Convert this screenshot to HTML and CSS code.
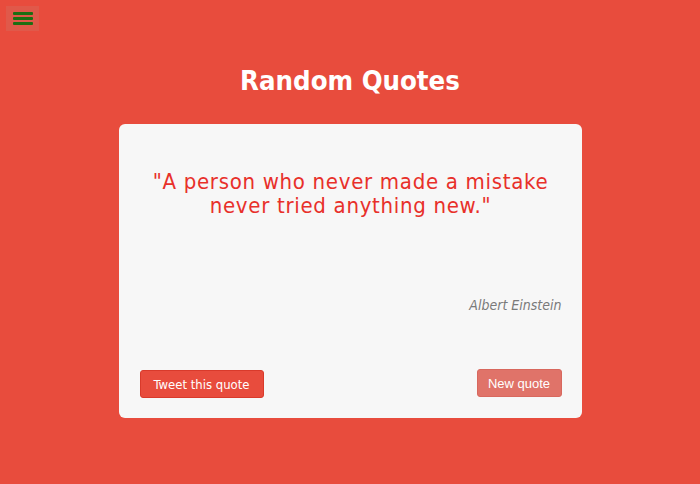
FILE: index.html
```html
<!DOCTYPE html>
<html>
<head>
<meta charset="utf-8">
<link rel="stylesheet" href="styles.css">
</head>
<body>
<button class="menu" aria-label="menu">
  <span class="bar"></span><span class="bar"></span><span class="bar"></span>
</button>
<h1 class="title">Random Quotes</h1>
<div class="card">
  <p class="quote">"A person who never made a mistake never tried anything new."</p>
  <p class="author">Albert Einstein</p>
  <div class="actions">
    <button class="btn tweet">Tweet this quote</button>
    <button class="btn new">New quote</button>
  </div>
</div>
</body>
</html>
```
FILE: styles.css
```css
html, body {
  margin: 0;
  padding: 0;
  background: #e84c3d;
  height: 100%;
  font-family: "DejaVu Sans Condensed", "DejaVu Sans", Verdana, sans-serif;
}
body {
  display: flex;
  flex-direction: column;
  align-items: center;
}
.menu {
  align-self: flex-start;
  margin: 6px 0 0 6px;
  width: 33px;
  height: 25px;
  padding: 6px 7px;
  border: none;
  background: #e0594a;
  display: flex;
  flex-direction: column;
  justify-content: space-between;
}
.bar {
  display: block;
  height: 3px;
  width: 20px;
  background: #1d6e12;
  border-radius: 1px;
}
.title {
  margin: 34px 0 0;
  color: #fff;
  font-size: 27.3px;
  font-weight: bold;
  line-height: 32px;
}
.card {
  margin-top: 27px;
  width: 463px;
  height: 294px;
  box-sizing: border-box;
  background: #f7f7f7;
  border-radius: 6px;
  padding: 46px 20px 20px 21px;
  display: flex;
  flex-direction: column;
}
.quote {
  margin: 0;
  color: #e8302a;
  font-size: 22px;
  line-height: 24px;
  text-align: center;
  letter-spacing: 0.7px;
}
.author {
  margin: 79px 0 0;
  text-align: right;
  color: #7a7a7a;
  font-style: italic;
  font-size: 14px;
}
.actions {
  margin-top: auto;
  display: flex;
  justify-content: space-between;
  align-items: flex-end;
}
.btn {
  height: 28px;
  border-radius: 3px;
  color: #fff;
  font-size: 13px;
  padding: 0;
  white-space: nowrap;
}
.tweet {
  background: #e84c3d;
  border: 1px solid #d93a2b;
  font-family: "DejaVu Sans Condensed", "DejaVu Sans", sans-serif;
  width: 124px;
}
.new {
  background: #e07369;
  border: 1px solid #d8685e;
  font-family: "Liberation Sans", Arial, sans-serif;
  width: 85px;
  margin-bottom: 1px;
}
```
